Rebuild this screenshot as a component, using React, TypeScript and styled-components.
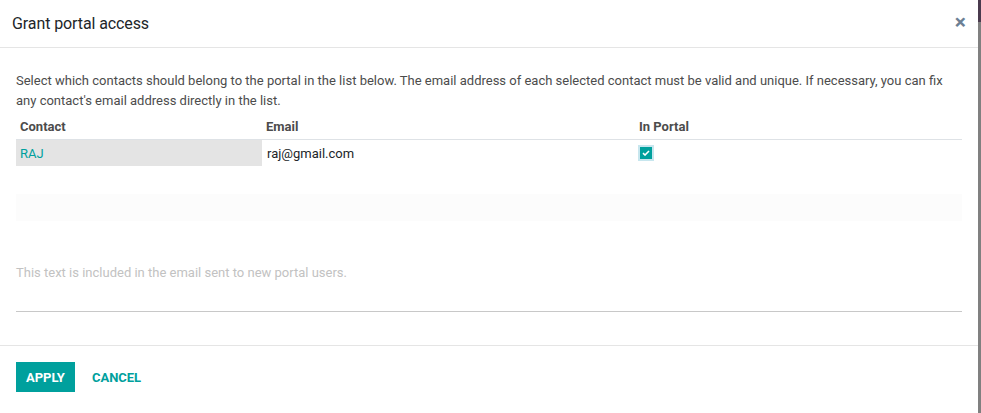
import styled, { createGlobalStyle } from "styled-components";

const GlobalStyle = createGlobalStyle`
  html, body {
    margin: 0;
    padding: 0;
  }
  body {
    font-family: Roboto, "Noto Sans", sans-serif;
    font-size: 13px;
    background: linear-gradient(to bottom, #4a3a4e 0, #4a3a4e 22px, #808080 22px);
  }
`

const Page = styled.div`
  display: flex;
  height: 413px;
`

const Modal = styled.div`
  width: 978px;
  height: 413px;
  background: #fff;
  display: flex;
  flex-direction: column;
`

const Header = styled.div`
  display: flex;
  align-items: center;
  justify-content: space-between;
  height: 47px;
  padding: 0 12px 0 12px;
  border-bottom: 1px solid #e5e5e5;
  box-sizing: content-box;
`

const ModalTitle = styled.h4`
  margin: 0;
  font-size: 16px;
  font-weight: 400;
  color: #212529;
  letter-spacing: -0.1px;
`

const Close = styled.span`
  font-size: 21px;
  font-weight: 700;
  color: #6c7f94;
  line-height: 1;
  margin-top: -3px;
`

const Body = styled.div`
  flex: 1;
  padding: 23px 16px 0 16px;
`

const Intro = styled.p`
  margin: 0;
  line-height: 20px;
  color: #4c4c4c;
`

const Table = styled.div`
  width: 946px;
  margin-top: 6px;
`

const Row = styled.div<{ $head?: boolean }>`
  display: grid;
  grid-template-columns: 246px 373px 327px;
  height: ${(p) => (p.$head ? "22px" : "26px")};
  border-bottom: ${(p) => (p.$head ? "1px solid #dee2e6" : "none")};
`

const HeadCell = styled.div`
  font-weight: 700;
  color: #4c4c4c;
  padding-left: 4px;
  line-height: 20px;
`

const Cell = styled.div<{ $readonly?: boolean; $link?: boolean }>`
  display: flex;
  align-items: center;
  padding-left: ${(p) => (p.$readonly ? "4px" : "5px")};
  background: ${(p) => (p.$readonly ? "#e4e4e4" : "transparent")};
  color: ${(p) => (p.$link ? "#00a09d" : "#212529")};
  font-size: 13px;
`

const CheckCell = styled(Cell)`
  padding-left: 3px;
`

const Checkbox = styled.span`
  width: 12px;
  height: 12px;
  background: #00a09d;
  border: 2px solid #c7e6ee;
  display: inline-flex;
  align-items: center;
  justify-content: center;
`

const Spacer = styled.div`
  height: 27px;
  margin-top: 28px;
  background: #fcfcfc;
  width: 946px;
`

const Note = styled.div`
  width: 946px;
  margin-top: 41px;
  height: 50px;
  border-bottom: 1px solid #c8c8c8;
  color: #c2c2c2;
  line-height: 20px;
  padding-top: 1px;
  box-sizing: border-box;
`

const Footer = styled.div`
  display: flex;
  align-items: flex-start;
  gap: 7px;
  height: 68px;
  padding: 16px 16px 0;
  border-top: 1px solid #e5e5e5;
  box-sizing: border-box;
`

const Button = styled.button<{ $primary?: boolean }>`
  font-family: Roboto, "Noto Sans", sans-serif;
  font-size: 13px;
  font-weight: 700;
  text-transform: uppercase;
  height: 30px;
  padding: 0 10px;
  border: none;
  background: ${(p) => (p.$primary ? "#00a09d" : "transparent")};
  color: ${(p) => (p.$primary ? "#fff" : "#00a09d")};
`

export default function App() {
  return (
    <>
      <GlobalStyle />
      <Page>
        <Modal>
          <Header>
            <ModalTitle>Grant portal access</ModalTitle>
            <Close>×</Close>
          </Header>
          <Body>
            <Intro>
              Select which contacts should belong to the portal in the list below. The email address of each selected contact must be valid and unique. If necessary, you can fix any contact's email address directly in the list.
            </Intro>
            <Table>
              <Row $head>
                <HeadCell>Contact</HeadCell>
                <HeadCell>Email</HeadCell>
                <HeadCell>In Portal</HeadCell>
              </Row>
              <Row>
                <Cell $readonly $link>RAJ</Cell>
                <Cell>raj@gmail.com</Cell>
                <CheckCell>
                  <Checkbox>
                    <svg width="8" height="6" viewBox="0 0 8 6">
                      <path d="M1 3.2 L3 5 L7 1" stroke="#fff" strokeWidth="1.6" fill="none" />
                    </svg>
                  </Checkbox>
                </CheckCell>
              </Row>
            </Table>
            <Spacer />
            <Note>This text is included in the email sent to new portal users.</Note>
          </Body>
          <Footer>
            <Button $primary>Apply</Button>
            <Button>Cancel</Button>
          </Footer>
        </Modal>
      </Page>
    </>
  );
}
